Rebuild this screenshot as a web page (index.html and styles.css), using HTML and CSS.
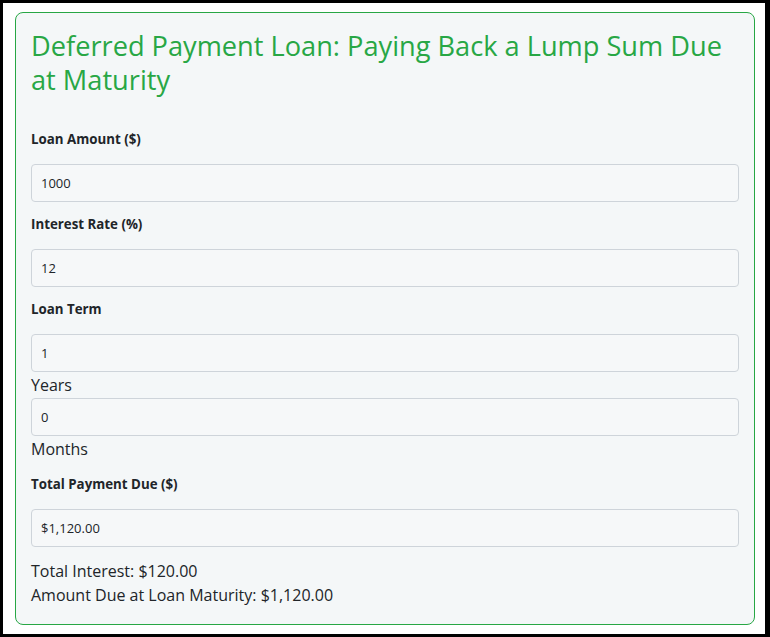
FILE: index.html
```html
<!DOCTYPE html>
<html lang="en">
<head>
<meta charset="utf-8">
<title>Deferred Payment Loan</title>
<link rel="stylesheet" href="styles.css">
</head>
<body>
<div class="frame">
  <div class="card">
    <h3 class="title">Deferred Payment Loan: Paying Back a Lump Sum Due at Maturity</h3>
    <div class="group">
      <label class="label" for="amount">Loan Amount ($)</label>
      <input class="input" id="amount" type="text" value="1000">
    </div>
    <div class="group">
      <label class="label" for="rate">Interest Rate (%)</label>
      <input class="input" id="rate" type="text" value="12">
    </div>
    <div class="group">
      <label class="label" for="years">Loan Term</label>
      <input class="input" id="years" type="text" value="1">
      <div class="unit">Years</div>
      <input class="input" id="months" type="text" value="0">
      <div class="unit">Months</div>
    </div>
    <div class="group">
      <label class="label" for="total">Total Payment Due ($)</label>
      <input class="input" id="total" type="text" value="$1,120.00" readonly>
    </div>
    <div class="results">
      <div class="line">Total Interest: $120.00</div>
      <div class="line">Amount Due at Loan Maturity: $1,120.00</div>
    </div>
  </div>
</div>
</body>
</html>
```

FILE: styles.css
```css
* { box-sizing: border-box; }
html, body { margin: 0; padding: 0; background: #fff; }
body {
  font-family: "Segoe UI", "Open Sans", "Liberation Sans", sans-serif;
  color: #212529;
}
.frame {
  height: 637px;
  border-style: solid;
  border-color: #000;
  border-width: 3px 5px 3px 3px;
  padding: 9px 10px 9px 12px;
  background: #fff;
}
.card {
  border: 1px solid #28a745;
  border-radius: 8px;
  background: #f4f7f8;
  padding: 16px 15px 17px;
}
.title {
  margin: 0 0 32px;
  font-size: 27.2px;
  line-height: 34px;
  font-weight: 400;
  color: #28a745;
}
.group { margin-bottom: 12px; }
.label {
  display: block;
  font-size: 13.3px;
  font-weight: 700;
  line-height: 20px;
  margin-bottom: 15px;
  color: #212529;
}
.input {
  display: block;
  width: 100%;
  height: 38px;
  margin: 0;
  padding: 0 9px;
  border: 1px solid #ced4da;
  border-radius: 4px;
  background: #f6f8f9;
  font-family: inherit;
  font-size: 13px;
  color: #212529;
  outline: none;
}
.unit {
  font-size: 16px;
  line-height: 26px;
}
.results { font-size: 16px; line-height: 24px; }
```
